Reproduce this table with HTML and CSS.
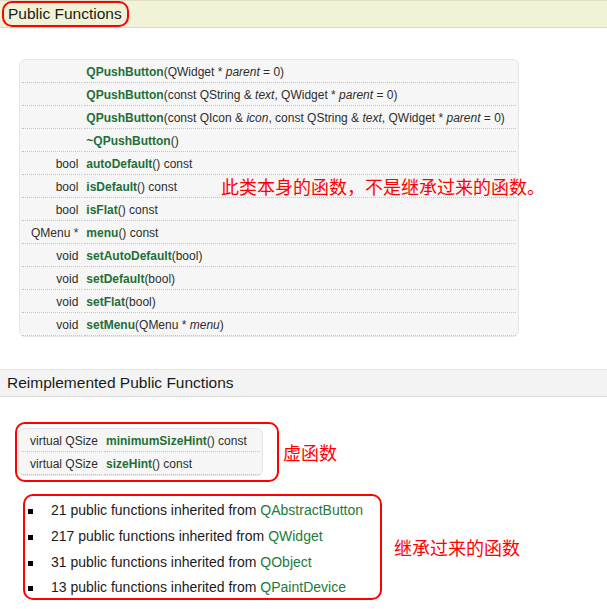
FILE: index.html
```html
<!DOCTYPE html>
<html>
<head>
<meta charset="utf-8">
<link rel="stylesheet" href="styles.css">
</head>
<body>
<h2 class="band band-yellow"><span class="circled">Public Functions</span></h2>

<div class="table-wrap">
  <table class="members members-main">
    <tr><td class="ret"></td><td class="sig"><a class="fn">QPushButton</a>(QWidget * <i>parent</i> = 0)</td></tr>
    <tr><td class="ret"></td><td class="sig"><a class="fn">QPushButton</a>(const QString &amp; <i>text</i>, QWidget * <i>parent</i> = 0)</td></tr>
    <tr><td class="ret"></td><td class="sig"><a class="fn">QPushButton</a>(const QIcon &amp; <i>icon</i>, const QString &amp; <i>text</i>, QWidget * <i>parent</i> = 0)</td></tr>
    <tr><td class="ret"></td><td class="sig"><a class="fn">~QPushButton</a>()</td></tr>
    <tr><td class="ret">bool</td><td class="sig"><a class="fn">autoDefault</a>() const</td></tr>
    <tr><td class="ret">bool</td><td class="sig"><a class="fn">isDefault</a>() const</td></tr>
    <tr><td class="ret">bool</td><td class="sig"><a class="fn">isFlat</a>() const</td></tr>
    <tr><td class="ret">QMenu *</td><td class="sig"><a class="fn">menu</a>() const</td></tr>
    <tr><td class="ret">void</td><td class="sig"><a class="fn">setAutoDefault</a>(bool)</td></tr>
    <tr><td class="ret">void</td><td class="sig"><a class="fn">setDefault</a>(bool)</td></tr>
    <tr><td class="ret">void</td><td class="sig"><a class="fn">setFlat</a>(bool)</td></tr>
    <tr><td class="ret">void</td><td class="sig"><a class="fn">setMenu</a>(QMenu * <i>menu</i>)</td></tr>
  </table>
  <span class="note note-over">此类本身的函数，不是继承过来的函数。</span>
</div>

<h2 class="band band-grey">Reimplemented Public Functions</h2>

<div class="annot-row annot-row-virtual">
  <div class="redbox redbox-virtual">
    <table class="members members-virtual">
      <tr><td class="ret">virtual QSize</td><td class="sig"><a class="fn">minimumSizeHint</a>() const</td></tr>
      <tr><td class="ret">virtual QSize</td><td class="sig"><a class="fn">sizeHint</a>() const</td></tr>
    </table>
  </div>
  <span class="note">虚函数</span>
</div>

<div class="annot-row annot-row-inherited">
  <ul class="redbox inherited">
    <li><span>21 public functions inherited from <a class="link">QAbstractButton</a></span></li>
    <li><span>217 public functions inherited from <a class="link">QWidget</a></span></li>
    <li><span>31 public functions inherited from <a class="link">QObject</a></span></li>
    <li><span>13 public functions inherited from <a class="link">QPaintDevice</a></span></li>
  </ul>
  <span class="note">继承过来的函数</span>
</div>
</body>
</html>
```

FILE: styles.css
```css
html, body {
  margin: 0;
  padding: 0;
  background: #ffffff;
}

body {
  font-family: "Liberation Sans", Arial, sans-serif;
  color: #2e2d2c;
  width: 607px;
  overflow: hidden;
}

.band {
  margin: 0;
  height: 26px;
  line-height: 26px;
  font-size: 15.5px;
  font-weight: normal;
  color: #1a1a1a;
}

.band-yellow {
  background: #f2f2d6;
  border-top: 1px solid #dedecb;
  border-bottom: 1px solid #d9d9c8;
  padding-left: 2px;
}

.circled {
  display: inline-block;
  box-sizing: border-box;
  height: 26px;
  line-height: 22px;
  border: 2px solid #ff0000;
  border-radius: 10px;
  padding: 0 5px 0 4px;
  vertical-align: top;
}

.band-grey {
  margin-top: 32px;
  background: #f2f3f2;
  border-top: 1px solid #e2e2e2;
  border-bottom: 1px solid #dcdcdc;
  padding-left: 7px;
}

.table-wrap {
  position: relative;
  margin: 31px 0 0 19px;
  width: 500px;
}

.members {
  border-collapse: separate;
  border-spacing: 2px 0;
  background: #f6f6f6;
  border: 1px solid #e6e6e6;
  border-radius: 6px;
  font-size: 12px;
}

.members-main {
  width: 500px;
}

.members-virtual {
  width: 245px;
}

.members td {
  box-sizing: border-box;
  height: 23px;
  padding: 1px 0 0 0;
  border-bottom: 1px dotted #c4c4c4;
  white-space: nowrap;
  vertical-align: middle;
}

.members td.ret {
  width: 1%;
  text-align: right;
  padding: 1px 4px 0 9px;
}

.members td.sig {
  padding-left: 2px;
}

.fn {
  font-weight: bold;
  color: #1e6f36;
  text-decoration: none;
}

.link {
  color: #237a3c;
  text-decoration: none;
}

.note {
  font-family: "Noto Sans CJK SC", "Liberation Sans", sans-serif;
  font-size: 18px;
  line-height: 24px;
  color: #ff0000;
  white-space: nowrap;
}

.note-over {
  position: absolute;
  left: 202px;
  top: 115px;
}

.annot-row {
  display: flex;
  align-items: center;
}

.annot-row-virtual {
  margin: 25px 0 0 15px;
  gap: 4px;
}

.annot-row-inherited {
  margin: 12px 0 0 23px;
  gap: 12px;
}

.redbox {
  box-sizing: border-box;
  border: 2px solid #ff0000;
  border-radius: 10px;
}

.redbox-virtual {
  width: 264px;
  padding: 4px 14px 4px 1px;
}

.inherited {
  list-style: none;
  margin: 0;
  padding: 0;
  width: 359px;
  font-size: 14px;
  color: #1a1a1a;
}

.inherited li {
  display: flex;
  align-items: center;
  height: 26px;
  padding-top: 2px;
  box-sizing: border-box;
  white-space: nowrap;
}

.inherited li:last-child {
  height: 24px;
}

.inherited li::before {
  content: "";
  display: inline-block;
  width: 5px;
  height: 5px;
  background: #000000;
  margin: 3px 18px 0 3px;
  flex: none;
}
```
